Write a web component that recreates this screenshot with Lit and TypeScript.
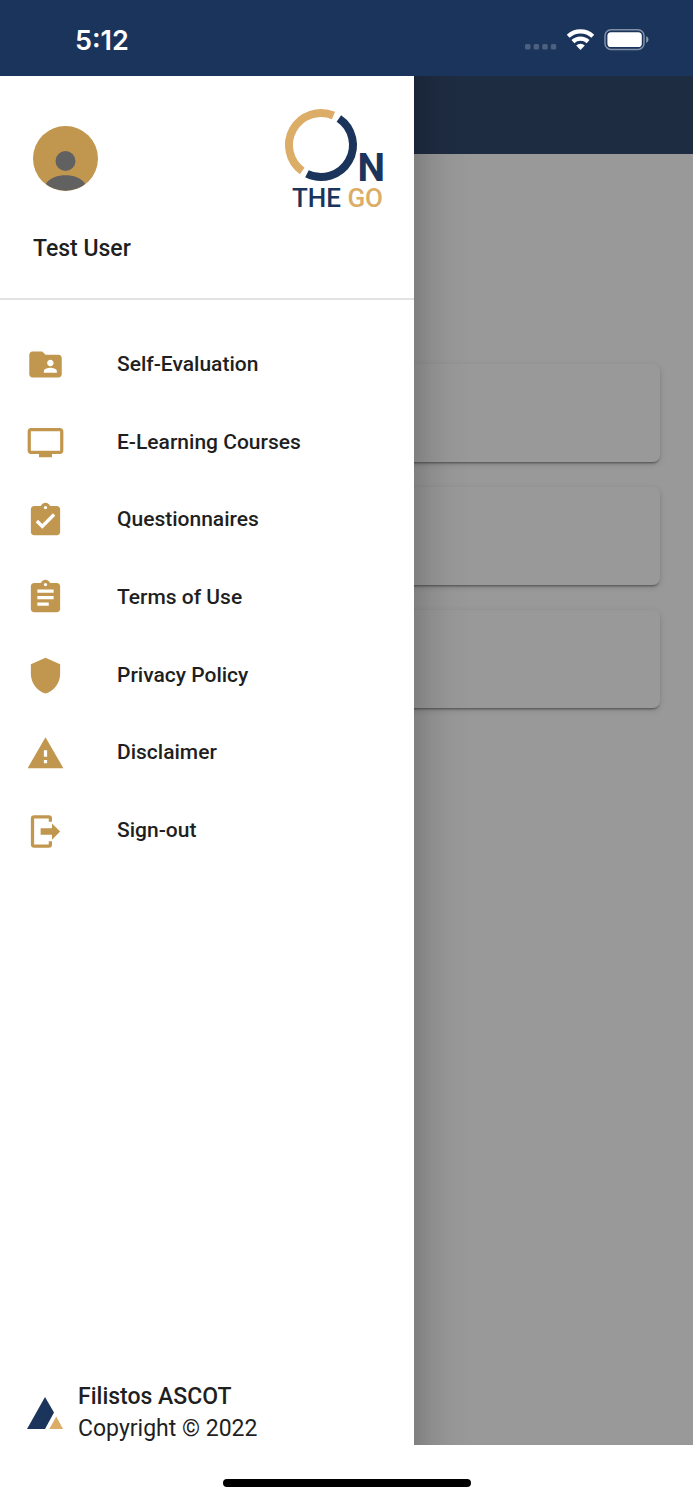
import { LitElement, html, svg, css } from "lit";
import { customElement, state } from "lit/decorators.js";

interface MenuItem {
  label: string;
  path: string;
}

const CLIPBOARD =
  "M19 3h-4.18C14.4 1.84 13.3 1 12 1c-1.3 0-2.4.84-2.82 2H5c-1.1 0-2 .9-2 2v14c0 1.1.9 2 2 2h14c1.1 0 2-.9 2-2V5c0-1.1-.9-2-2-2zm-7 0c.55 0 1 .45 1 1s-.45 1-1 1-1-.45-1-1 .45-1 1-1z";

const MENU: MenuItem[] = [
  {
    label: "Self-Evaluation",
    path: "M20 6h-8l-2-2H4c-1.1 0-1.99.9-1.99 2L2 18c0 1.1.9 2 2 2h16c1.1 0 2-.9 2-2V8c0-1.1-.9-2-2-2zm-5 3c1.1 0 2 .9 2 2s-.9 2-2 2-2-.9-2-2 .9-2 2-2zm4 8h-8v-1c0-1.33 2.67-2 4-2s4 .67 4 2v1z",
  },
  {
    label: "E-Learning Courses",
    path: "M21 3H3c-1.11 0-2 .89-2 2v12c0 1.1.89 2 2 2h5v2h8v-2h5c1.1 0 1.99-.9 1.99-2L23 5c0-1.11-.9-2-2-2zm0 14H3V5h18v12z",
  },
  {
    label: "Questionnaires",
    path: CLIPBOARD + "m-2 14l-4-4 1.41-1.41L10 14.17l6.59-6.59L18 9l-8 8z",
  },
  {
    label: "Terms of Use",
    path: CLIPBOARD + "m2 14H7v-2h7v2zm3-4H7v-2h10v2zm0-4H7V7h10v2z",
  },
  {
    label: "Privacy Policy",
    path: "M12 1L3 5v6c0 5.55 3.84 10.74 9 12 5.16-1.26 9-6.45 9-12V5l-9-4z",
  },
  {
    label: "Disclaimer",
    path: "M1 21h22L12 2 1 21zm12-3h-2v-2h2v2zm0-4h-2v-4h2v4z",
  },
  {
    label: "Sign-out",
    path: "M16,17V14H9V10H16V7L21,12L16,17M14,2A2,2 0 0,1 16,4V6H14V4H5V20H14V18H16V20A2,2 0 0,1 14,22H5A2,2 0 0,1 3,20V4A2,2 0 0,1 5,2H14Z",
  },
];

/* Point on the logo ring, angle in degrees clockwise from the top. */
const ringPoint = (deg: number) => {
  const a = (deg * Math.PI) / 180;
  return `${(36 + 32 * Math.sin(a)).toFixed(2)} ${(37 - 32 * Math.cos(a)).toFixed(2)}`;
};

@customElement("status-bar")
class StatusBar extends LitElement {
  static styles = css`
    :host {
      display: flex;
      align-items: center;
      justify-content: space-between;
      box-sizing: border-box;
      height: 76px;
      padding: 6px 44px 0 75px;
      background: #1b345c;
      color: #fff;
      font: 600 27px/32px Inter, sans-serif;
    }
    .signals {
      display: block;
      width: 125px;
      height: 24px;
    }
  `;

  render() {
    return html`
      <time>5:12</time>
      <svg class="signals" viewBox="0 0 125 24" aria-hidden="true">
        <g fill="#fff" fill-opacity=".22">
          <rect x="1" y="15" width="5.5" height="5.5" rx="1.6" />
          <rect x="9.6" y="15" width="5.5" height="5.5" rx="1.6" />
          <rect x="18.2" y="15" width="5.5" height="5.5" rx="1.6" />
          <rect x="26.8" y="15" width="5.5" height="5.5" rx="1.6" />
        </g>
        <g fill="none" stroke="#fff" stroke-width="4.2">
          <path d="M44.2 7.2a18.2 18.2 0 0 1 24.6 0" />
          <path d="M48.9 12.6a11.2 11.2 0 0 1 15.2 0" />
        </g>
        <path fill="#fff" d="M56.5 21l-4.3-4.4a6.2 6.2 0 0 1 8.6 0z" />
        <rect x="81" y="0.8" width="39" height="19.6" rx="6" fill="none" stroke="#fff" stroke-opacity=".45" stroke-width="1.5" />
        <rect x="83.4" y="3.2" width="34.4" height="14.8" rx="3.6" fill="#fff" />
        <path d="M122.2 7.2v6.8c1.4-.5 2.3-1.9 2.3-3.4s-.9-2.9-2.3-3.4z" fill="#fff" fill-opacity=".5" />
      </svg>
    `;
  }
}

@customElement("brand-logo")
class BrandLogo extends LitElement {
  static styles = css`
    :host {
      display: block;
      width: 99px;
      height: 100px;
    }
    .art {
      display: block;
      width: 100%;
      height: 100%;
      overflow: visible;
      font-family: Roboto, sans-serif;
    }
    .ring {
      fill: none;
      stroke-width: 8;
    }
    .navy-ring { stroke: #1b345c; }
    .gold-ring { stroke: #dbad67; }
    .initial {
      font-size: 39px;
      font-weight: 700;
      fill: #1b345c;
    }
    .words {
      font-size: 26px;
      font-weight: 500;
      fill: #1b345c;
    }
    .gold { fill: #dbad67; }
  `;

  render() {
    return html`
      <svg class="art" viewBox="0 0 99 100" role="img" aria-label="On the go">
        ${svg`
          <path class="ring navy-ring" d="M${ringPoint(34)} A32 32 0 0 1 ${ringPoint(206)}" />
          <path class="ring gold-ring" d="M${ringPoint(216)} A32 32 0 0 1 ${ringPoint(383)}" />
        `}
        <text class="initial" x="100" y="73" text-anchor="end">N</text>
        <text class="words" x="98" y="99" text-anchor="end">THE <tspan class="gold">GO</tspan></text>
      </svg>
    `;
  }
}

@customElement("nav-drawer")
class NavDrawer extends LitElement {
  static styles = css`
    :host {
      display: flex;
      flex-direction: column;
      background: #fff;
      color: #1f1f1f;
      font-family: Roboto, sans-serif;
    }
    /* Shade that the open drawer casts on the page beside it. */
    :host::after {
      content: "";
      position: absolute;
      inset: 0 auto 0 100%;
      width: 60px;
      background: linear-gradient(
        to right,
        rgba(0, 0, 0, 0.17),
        rgba(0, 0, 0, 0.08) 30%,
        rgba(0, 0, 0, 0.025) 60%,
        rgba(0, 0, 0, 0)
      );
      pointer-events: none;
    }
    .head {
      display: flex;
      flex-direction: column;
      gap: 26px;
      padding: 32px 30px 35px 33px;
      border-bottom: 2px solid #e1e2e2;
    }
    .brand {
      display: flex;
      align-items: center;
      justify-content: space-between;
    }
    .avatar {
      display: block;
      width: 65px;
      height: 65px;
      border-radius: 50%;
      background: #c1974f;
    }
    .user {
      margin: 0;
      font-size: 23px;
      font-weight: 500;
      line-height: 29px;
    }
    .menu {
      display: grid;
      grid-auto-rows: 1fr;
      height: 544px;
      margin: 0;
      padding: 26px 0 0;
      list-style: none;
    }
    .link {
      display: flex;
      align-items: center;
      gap: 52px;
      height: 100%;
      padding-left: 26px;
      color: inherit;
      text-decoration: none;
      font-size: 21px;
      font-weight: 500;
      line-height: 28px;
    }
    .label { padding-bottom: 2px; }
    .icon {
      width: 39px;
      height: 39px;
      fill: #c1974f;
    }
    .foot {
      display: flex;
      align-items: center;
      gap: 15px;
      margin-top: auto;
      padding-left: 27px;
      font-size: 23px;
      line-height: 32px;
    }
    .mark {
      width: 36px;
      height: 32px;
    }
    .company {
      margin: 0;
      font-weight: 500;
    }
    .copy { margin: 0; }
  `;

  render() {
    return html`
      <header class="head">
        <div class="brand">
          <svg class="avatar" viewBox="0 0 65 65" role="img" aria-label="Profile picture">
            <g fill="#616161">
              <circle cx="32.5" cy="35" r="10" />
              <path d="M12.8 58C16.5 51.5 25 49.2 32.5 49.2S48.5 51.5 52.2 58A32.5 32.5 0 0 1 12.8 58z" />
            </g>
          </svg>
          <brand-logo></brand-logo>
        </div>
        <p class="user">Test User</p>
      </header>
      <nav>
        <ul class="menu">
          ${MENU.map(
            (item) => html`
              <li>
                <a class="link" href="#">
                  <svg class="icon" viewBox="0 0 24 24" aria-hidden="true"><path d=${item.path} /></svg>
                  <span class="label">${item.label}</span>
                </a>
              </li>
            `
          )}
        </ul>
      </nav>
      <footer class="foot">
        <svg class="mark" viewBox="0 0 36 32" aria-hidden="true">
          <path fill="#1b345c" d="M18 0l9 15.5L18 32H0z" />
          <path fill="#dbad67" d="M29.3 19.5L36 32H22.3z" />
        </svg>
        <div>
          <p class="company">Filistos ASCOT</p>
          <p class="copy">Copyright © 2022</p>
        </div>
      </footer>
    `;
  }
}

@customElement("app-root")
class AppRoot extends LitElement {
  @state() private cards = [1, 2, 3];

  static styles = css`
    :host {
      display: flex;
      flex-direction: column;
      min-height: 100vh;
      background: #fff;
    }
    .stage {
      position: relative;
      display: flex;
      flex: 1;
      flex-direction: column;
      overflow: hidden;
      background: #999;
    }
    .appbar {
      height: 78px;
      background: #1e2c42;
    }
    .cards {
      display: flex;
      flex-direction: column;
      gap: 25px;
      padding: 210px 33px 0;
    }
    .card {
      height: 98px;
      border-radius: 7px;
      background: #999;
      box-shadow: 0 3px 2px -2px rgba(0, 0, 0, 0.3), 0 2px 2px rgba(0, 0, 0, 0.1), 0 2px 6px rgba(0, 0, 0, 0.14);
    }
    .drawer {
      position: absolute;
      inset: 0 auto 0 0;
      box-sizing: border-box;
      width: 414px;
      max-width: 86%;
    }
    .home {
      display: flex;
      align-items: center;
      justify-content: center;
      height: 55px;
      padding-top: 20px;
      box-sizing: border-box;
    }
    .pill {
      width: 248px;
      height: 8px;
      border-radius: 4px;
      background: #000;
    }
  `;

  render() {
    return html`
      <status-bar></status-bar>
      <div class="stage">
        <div class="appbar"></div>
        <main class="cards">${this.cards.map(() => html`<div class="card"></div>`)}</main>
        <nav-drawer class="drawer"></nav-drawer>
      </div>
      <div class="home"><div class="pill"></div></div>
    `;
  }
}
